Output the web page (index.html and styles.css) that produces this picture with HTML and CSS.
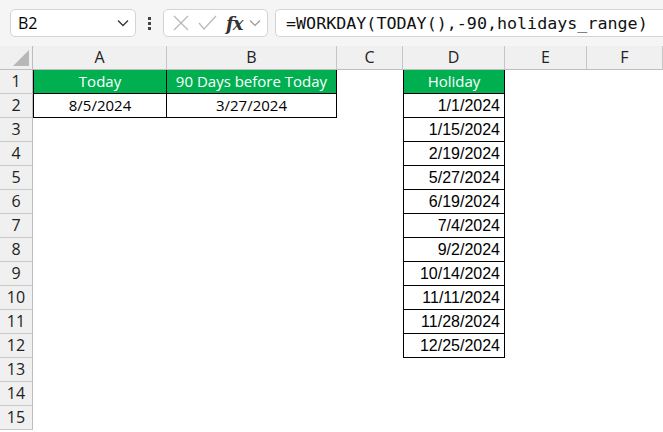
FILE: index.html
```html
<!DOCTYPE html>
<html lang="en">
<head>
    <meta charset="UTF-8">
    <title>WORKDAY - 90 days before today</title>
    <link rel="stylesheet" href="styles.css">
</head>
<body>
    <div class="formula-bar">
        <div class="name-box">
            <span>B2</span>
            <svg class="chev" width="12" height="8" viewBox="0 0 12 8"><path d="M1 1.5l5 5 5-5" fill="none" stroke="#333" stroke-width="1.3"/></svg>
        </div>
        <div class="dots"><i></i><i></i><i></i></div>
        <div class="fx-tools">
            <svg width="18" height="18" viewBox="0 0 18 18"><path d="M2 2l14 14M16 2L2 16" stroke="#b9b9b9" stroke-width="1.3"/></svg>
            <svg width="20" height="18" viewBox="0 0 20 18"><path d="M2 9l5 6L19 2" fill="none" stroke="#b9b9b9" stroke-width="1.3"/></svg>
            <span class="fx">fx</span>
            <svg width="12" height="8" viewBox="0 0 12 8"><path d="M1 1.5l5 5 5-5" fill="none" stroke="#999" stroke-width="1.2"/></svg>
        </div>
        <div class="formula">=WORKDAY(TODAY(),-90,holidays_range)</div>
    </div>

    <div class="sheet">
        <div class="corner"><span class="tri"></span></div>
        <div class="col-hdr">A</div>
        <div class="col-hdr">B</div>
        <div class="col-hdr">C</div>
        <div class="col-hdr">D</div>
        <div class="col-hdr">E</div>
        <div class="col-hdr">F</div>

        <div class="row-hdr">1</div>
        <div class="cell head first">Today</div>
        <div class="cell head">90 Days before Today</div>
        <div class="cell"></div>
        <div class="cell head first">Holiday</div>
        <div class="cell"></div>
        <div class="cell"></div>

        <div class="row-hdr">2</div>
        <div class="cell box first">8/5/2024</div>
        <div class="cell box">3/27/2024</div>
        <div class="cell"></div>
        <div class="cell box first date">1/1/2024</div>
        <div class="cell"></div>
        <div class="cell"></div>

        <div class="row-hdr">3</div>
        <div class="cell"></div><div class="cell"></div><div class="cell"></div>
        <div class="cell box first date">1/15/2024</div>
        <div class="cell"></div><div class="cell"></div>

        <div class="row-hdr">4</div>
        <div class="cell"></div><div class="cell"></div><div class="cell"></div>
        <div class="cell box first date">2/19/2024</div>
        <div class="cell"></div><div class="cell"></div>

        <div class="row-hdr">5</div>
        <div class="cell"></div><div class="cell"></div><div class="cell"></div>
        <div class="cell box first date">5/27/2024</div>
        <div class="cell"></div><div class="cell"></div>

        <div class="row-hdr">6</div>
        <div class="cell"></div><div class="cell"></div><div class="cell"></div>
        <div class="cell box first date">6/19/2024</div>
        <div class="cell"></div><div class="cell"></div>

        <div class="row-hdr">7</div>
        <div class="cell"></div><div class="cell"></div><div class="cell"></div>
        <div class="cell box first date">7/4/2024</div>
        <div class="cell"></div><div class="cell"></div>

        <div class="row-hdr">8</div>
        <div class="cell"></div><div class="cell"></div><div class="cell"></div>
        <div class="cell box first date">9/2/2024</div>
        <div class="cell"></div><div class="cell"></div>

        <div class="row-hdr">9</div>
        <div class="cell"></div><div class="cell"></div><div class="cell"></div>
        <div class="cell box first date">10/14/2024</div>
        <div class="cell"></div><div class="cell"></div>

        <div class="row-hdr">10</div>
        <div class="cell"></div><div class="cell"></div><div class="cell"></div>
        <div class="cell box first date">11/11/2024</div>
        <div class="cell"></div><div class="cell"></div>

        <div class="row-hdr">11</div>
        <div class="cell"></div><div class="cell"></div><div class="cell"></div>
        <div class="cell box first date">11/28/2024</div>
        <div class="cell"></div><div class="cell"></div>

        <div class="row-hdr">12</div>
        <div class="cell"></div><div class="cell"></div><div class="cell"></div>
        <div class="cell box first date">12/25/2024</div>
        <div class="cell"></div><div class="cell"></div>

        <div class="row-hdr">13</div>
        <div class="cell"></div><div class="cell"></div><div class="cell"></div>
        <div class="cell"></div><div class="cell"></div><div class="cell"></div>

        <div class="row-hdr">14</div>
        <div class="cell"></div><div class="cell"></div><div class="cell"></div>
        <div class="cell"></div><div class="cell"></div><div class="cell"></div>

        <div class="row-hdr">15</div>
        <div class="cell"></div><div class="cell"></div><div class="cell"></div>
        <div class="cell"></div><div class="cell"></div><div class="cell"></div>
    </div>
</body>
</html>
```

FILE: styles.css
```css
body {
    margin: 0;
    width: 663px;
    height: 432px;
    overflow: hidden;
    background: #fff;
    font-family: "Open Sans", "Noto Sans", sans-serif;
    color: #000;
}
.formula-bar {
    display: flex;
    align-items: center;
    height: 46px;
    padding-left: 10px;
    background: #f5f5f5;
    box-sizing: border-box;
    overflow: hidden;
    white-space: nowrap;
}
.name-box,
.fx-tools,
.formula {
    flex-shrink: 0;
    height: 28px;
    box-sizing: border-box;
    background: #fff;
    border: 1px solid #d4d4d4;
    border-radius: 5px;
    display: flex;
    align-items: center;
}
.name-box {
    width: 126px;
    padding: 0 6px 0 7px;
    justify-content: space-between;
    font-size: 16px;
}
.dots {
    flex-shrink: 0;
    width: 27px;
    display: flex;
    flex-direction: column;
    align-items: center;
    gap: 2px;
}
.dots i {
    width: 3px;
    height: 3px;
    background: #444;
}
.fx-tools {
    width: 105px;
    padding: 0 5px 0 8px;
    gap: 7px;
}
.fx {
    font-family: "DejaVu Serif", serif;
    font-style: italic;
    font-size: 18px;
    font-weight: bold;
    color: #333;
    margin-left: 2px;
    letter-spacing: -1px;
}
.formula {
    margin-left: 7px;
    padding-left: 10px;
    width: 420px;
    border-right: none;
    border-radius: 5px 0 0 5px;
    font-family: "DejaVu Sans Mono", monospace;
    font-size: 16.7px;
    color: #111;
}
.sheet {
    display: grid;
    grid-template-columns: 33px 134px 170px 66px 102px 82px 76px;
    grid-auto-rows: 24px;
    font-size: 15px;
}
.corner,
.col-hdr,
.row-hdr {
    background: #f0f0f0;
    box-sizing: border-box;
    color: #222;
    font-size: 16px;
}
.corner {
    border-right: 1px solid #bdbdbd;
    border-bottom: 1px solid #bdbdbd;
    position: relative;
}
.tri {
    position: absolute;
    right: 3px;
    bottom: 3px;
    width: 0;
    height: 0;
    border-left: 16px solid transparent;
    border-bottom: 16px solid #b8b8b8;
}
.col-hdr {
    border-right: 1px solid #c6c6c6;
    border-bottom: 1px solid #bdbdbd;
    text-align: center;
    line-height: 23px;
}
.row-hdr {
    border-right: 1px solid #bdbdbd;
    border-bottom: 1px solid #c8c8c8;
    text-align: center;
    line-height: 23px;
}
.cell {
    box-sizing: border-box;
    line-height: 23px;
    text-align: center;
    padding: 0 4px;
    white-space: nowrap;
    overflow: hidden;
}
.box,
.head {
    border-right: 1px solid #000;
    border-bottom: 1px solid #000;
}
.first {
    border-left: 1px solid #000;
}
.head {
    background: #00b050;
    color: #fff;
}
.date {
    text-align: right;
    font-family: "Liberation Sans", Arial, sans-serif;
    font-size: 16px;
}
```
